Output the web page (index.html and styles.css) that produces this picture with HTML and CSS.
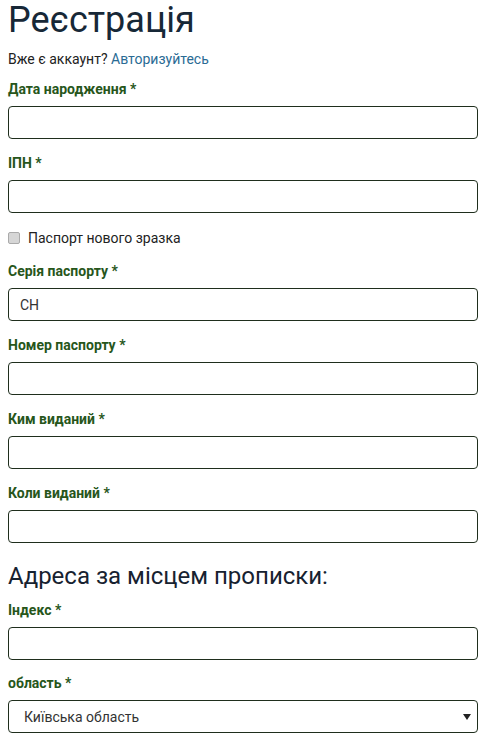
FILE: index.html
```html
<!DOCTYPE html>
<html lang="uk">
<head>
<meta charset="utf-8">
<title>Реєстрація</title>
<link rel="stylesheet" href="styles.css">
</head>
<body>
<div class="page">
  <h1 class="title">Реєстрація</h1>
  <p class="subtitle">Вже є аккаунт? <a href="#" class="link">Авторизуйтесь</a></p>

  <div class="group">
    <label class="label">Дата народження *</label>
    <input class="field" type="text">
  </div>
  <div class="group">
    <label class="label">ІПН *</label>
    <input class="field" type="text">
  </div>
  <div class="check-row">
    <input class="check" type="checkbox" id="newpass">
    <label class="check-label" for="newpass">Паспорт нового зразка</label>
  </div>
  <div class="group">
    <label class="label">Серія паспорту *</label>
    <input class="field" type="text" value="CH">
  </div>
  <div class="group">
    <label class="label">Номер паспорту *</label>
    <input class="field" type="text">
  </div>
  <div class="group">
    <label class="label">Ким виданий *</label>
    <input class="field" type="text">
  </div>
  <div class="group">
    <label class="label">Коли виданий *</label>
    <input class="field" type="text">
  </div>

  <h2 class="section">Адреса за місцем прописки:</h2>

  <div class="group group-tight">
    <label class="label">Індекс *</label>
    <input class="field" type="text">
  </div>
  <div class="group">
    <label class="label">область *</label>
    <div class="select-wrap">
      <select class="field select">
        <option>Київська область</option>
      </select>
      <svg class="arrow" width="8" height="6" viewBox="0 0 8 6"><path d="M0 0H8L4 6Z" fill="#222"/></svg>
    </div>
  </div>
</div>
</body>
</html>
```

FILE: styles.css
```css
* { box-sizing: border-box; }
html, body { margin: 0; padding: 0; background: #fff; }
body {
  font-family: Roboto, "Liberation Sans", Arial, sans-serif;
  color: #222;
}
.page {
  width: 470px;
  margin-left: 8px;
}
.title {
  margin: 0;
  font-size: 36px;
  line-height: 40px;
  font-weight: 400;
  color: #172837;
}
.subtitle {
  margin: 10px 0 12px;
  font-size: 14px;
  line-height: 18px;
  color: #222;
}
.link {
  color: #2a6b94;
  text-decoration: none;
}
.group {
  margin-bottom: 15px;
}
.group-tight {
  margin-bottom: 14px;
}
.label {
  display: block;
  font-size: 14px;
  line-height: 18px;
  font-weight: 700;
  color: #27561b;
  margin-bottom: 8px;
}
.field {
  display: block;
  width: 100%;
  height: 33px;
  border: 1px solid #1f2e1d;
  border-radius: 4px;
  background: #fff;
  padding: 0 11px;
  font-family: Roboto, "Liberation Sans", Arial, sans-serif;
  font-size: 14px;
  color: #333;
  outline: none;
}
.check-row {
  display: flex;
  align-items: center;
  height: 19px;
  margin-bottom: 15px;
}
.check {
  appearance: none;
  -webkit-appearance: none;
  width: 12px;
  height: 12px;
  margin: 0 8px 0 0;
  border: 1px solid #aaa;
  border-radius: 2px;
  background: #d6d6d6;
}
.check-label {
  font-size: 14px;
  color: #222;
}
.section {
  margin: 19px 0 11px;
  font-size: 24px;
  line-height: 28px;
  font-weight: 400;
  color: #172230;
}
.select-wrap {
  position: relative;
}
.select {
  appearance: none;
  -webkit-appearance: none;
  padding-left: 15px;
  font-size: 14px;
  color: #333;
}
.arrow {
  position: absolute;
  right: 7px;
  top: 14px;
}
```
